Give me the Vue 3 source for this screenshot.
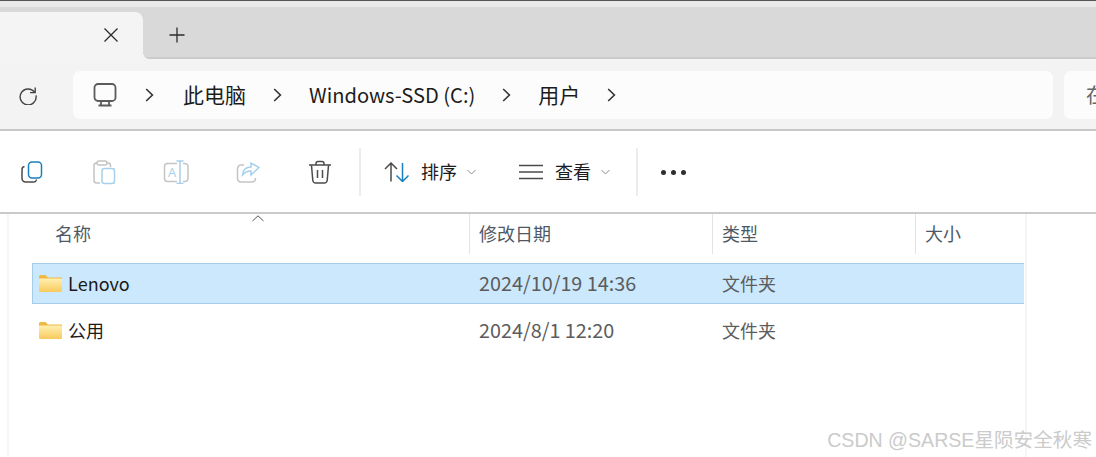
<template>
  <div class="explorer">
    <div class="top-edge"></div>
    <div class="tabbar">
      <div class="tab">
        <svg class="close" width="16" height="16" viewBox="0 0 16 16"><path d="M1.500 1.500l13 13M14.500 1.500l-13 13" /></svg>
      </div>
      <svg class="plus" width="16" height="16" viewBox="0 0 16 16"><path d="M8 .5v15M.5 8h15" /></svg>
    </div>

    <div class="navbar">
      <svg class="refresh" width="20" height="20" viewBox="0 0 20 20">
        <path d="M16.600 7.200A8 8 0 1 0 18 10.400" />
        <path d="M17.200 2.400v5.200h-5.200" />
      </svg>
      <div class="address">
        <svg class="pc" width="24" height="24" viewBox="0 0 24 24">
          <rect x="1.500" y="1" width="21" height="17" rx="3.500" />
          <path d="M8 18.500v3M16 18.500v3M5.500 22.500h13" />
        </svg>
        <template v-for="crumb in crumbs" :key="crumb.label">
          <svg class="chevron" width="9" height="14" viewBox="0 0 9 14"><path d="M1.200 1l6.200 6-6.200 6" /></svg>
          <span class="crumb" :class="{ latin: crumb.latin }">{{ crumb.label }}</span>
        </template>
        <svg class="chevron" width="9" height="14" viewBox="0 0 9 14"><path d="M1.200 1l6.200 6-6.200 6" /></svg>
      </div>
      <div class="search">在</div>
    </div>

    <div class="toolbar">
      <button class="tool">
        <svg width="24" height="24" viewBox="0 0 24 24">
          <path class="dark" d="M4.500 6.500A3 3 0 0 0 2 9.500v9a3.500 3.500 0 0 0 3.500 3.500h8a3 3 0 0 0 3-2.500" />
          <rect class="blue" x="8.500" y="2" width="13" height="16" rx="3.500" />
        </svg>
      </button>
      <button class="tool">
        <svg width="24" height="26" viewBox="0 0 24 26">
          <path class="dim" d="M5 4H4.500A2.500 2.500 0 0 0 2 6.500v15A2.500 2.500 0 0 0 4.500 24H8M15 4h1A2.500 2.500 0 0 1 18.500 6.500V8" />
          <rect class="dim" x="5" y="2" width="10" height="4" rx="2" />
          <rect class="pale" x="10" y="9.500" width="12.500" height="15" rx="2.500" />
        </svg>
      </button>
      <button class="tool">
        <svg width="26" height="24" viewBox="0 0 26 24">
          <path class="dim" d="M14 3.500H4.500a3 3 0 0 0-3 3v12a3 3 0 0 0 3 3H14M20 3.500h2a3 3 0 0 1 3 3v12a3 3 0 0 1-3 3h-2" />
          <path class="pale" d="M13.500 1h7M13.500 23.500h7M17 1v22.500" />
          <text class="icon-letter" x="5" y="17">A</text>
        </svg>
      </button>
      <button class="tool">
        <svg width="24" height="24" viewBox="0 0 24 24">
          <path class="dim" d="M8 5H5a3.500 3.500 0 0 0-3.500 3.500v10A3.500 3.500 0 0 0 5 22h11a3.500 3.500 0 0 0 3.500-3.500V18" />
          <path class="pale" d="M15 3v4c-5 0-8 3-8.500 8 2.500-3 5-4 8.500-4v4l8-7.500z" />
        </svg>
      </button>
      <button class="tool">
        <svg width="24" height="24" viewBox="0 0 24 24">
          <path class="dark" d="M1 5h22M8 5V3.500a2 2 0 0 1 2-2h4a2 2 0 0 1 2 2V5M3.500 5.500l1.300 15a3 3 0 0 0 3 2.500h8.400a3 3 0 0 0 3-2.500l1.300-15" />
          <path class="dark" d="M9.500 10v8M14.500 10v8" />
        </svg>
      </button>
      <div class="sep first"></div>
      <button class="menu sort">
        <svg width="26" height="20" viewBox="0 0 26 20">
          <path class="dark" d="M7 19.500V1M1 7l6-6 6 6" />
          <path class="blue" d="M18.500 1v18.500M12.500 13.500l6 6 6-6" />
        </svg>
        <span>排序</span>
        <svg class="caret" width="9" height="6" viewBox="0 0 9 6"><path d="M.5 1l4 4 4-4" /></svg>
      </button>
      <button class="menu view">
        <svg width="24" height="16" viewBox="0 0 24 16">
          <path class="dark" d="M0 1.500h24M0 8h24M0 14.500h24" />
        </svg>
        <span>查看</span>
        <svg class="caret" width="9" height="6" viewBox="0 0 9 6"><path d="M.5 1l4 4 4-4" /></svg>
      </button>
      <div class="sep second"></div>
      <div class="more"><i></i><i></i><i></i></div>
    </div>

    <div class="content">
      <div class="list">
        <div class="thead">
          <span class="col name-col">名称</span>
          <span class="col">修改日期</span>
          <span class="col">类型</span>
          <span class="col">大小</span>
        </div>
        <div
          v-for="row in rows"
          :key="row.name"
          class="row"
          :class="{ selected: row.selected }"
        >
          <div class="name">
            <svg width="23" height="17" viewBox="0 0 23 17">
              <defs>
                <linearGradient :id="'fold-' + row.id" x1="0" y1="0" x2="0" y2="1">
                  <stop offset="0" stop-color="#fff0b0" />
                  <stop offset="1" stop-color="#f8c95c" />
                </linearGradient>
              </defs>
              <path d="M0 1.500A1.500 1.500 0 0 1 1.500 0h5l2.500 2.500h14V5H0z" fill="#f0b93f" />
              <rect x="0" y="3.500" width="23" height="13.500" rx="1" :fill="'url(#fold-' + row.id + ')'" />
            </svg>
            <span class="cell-text">{{ row.name }}</span>
          </div>
          <span class="date cell-text">{{ row.date }}</span>
          <span class="type cell-text">{{ row.type }}</span>
          <span></span>
        </div>
      </div>
      <svg class="sort-arrow" width="12" height="7" viewBox="0 0 12 7"><path d="M.5 6L6 .8 11.500 6" /></svg>
      <div class="watermark">CSDN @SARSE星陨安全秋寒</div>
    </div>
  </div>
</template>

<script setup>
const crumbs = [
  { label: '此电脑', latin: false },
  { label: 'Windows-SSD (C:)', latin: true },
  { label: '用户', latin: false }
]

const rows = [
  { id: 1, name: 'Lenovo', date: '2024/10/19 14:36', type: '文件夹', selected: true },
  { id: 2, name: '公用', date: '2024/8/1 12:20', type: '文件夹', selected: false }
]
</script>

<style>
html, body {
  margin: 0;
  background: #fff;
  overflow: hidden;
}
</style>

<style scoped>
.explorer {
  width: 1096px;
  height: 457px;
  overflow: hidden;
  background: #fff;
  font-family: "Noto Sans CJK SC", "Open Sans", sans-serif;
  color: #1c1c1c;
}

.top-edge {
  height: 7px;
  background: #e9e9e9;
  border-top: 1px solid #555;
  box-sizing: border-box;
}

.tabbar {
  height: 52px;
  background: #d9d9d9;
  border-bottom: 2px solid #cbcbcb;
  box-sizing: border-box;
  display: flex;
  align-items: flex-start;
}

.tab {
  width: 143px;
  height: 51px;
  margin-top: 5px;
  background: #f4f4f4;
  border-radius: 0 8px 0 0;
  position: relative;
  flex: none;
}

.tab::after {
  content: "";
  position: absolute;
  right: -6px;
  bottom: 4px;
  width: 6px;
  height: 6px;
  background: radial-gradient(circle at 100% 0, transparent 5.500px, #f4f4f4 6px);
}

.close {
  position: absolute;
  left: 103px;
  top: 15px;
}

.close path, .plus path {
  fill: none;
  stroke: #2b2b2b;
  stroke-width: 1.300;
}

.plus {
  margin: 20px 0 0 26px;
}

.navbar {
  height: 72px;
  background: #f3f3f3;
  border-bottom: 2px solid #c9c9c9;
  box-sizing: border-box;
  display: flex;
  align-items: flex-start;
  padding-top: 12px;
}

.refresh {
  margin: 14px 0 0 18px;
  flex: none;
}

.refresh path {
  fill: none;
  stroke: #444;
  stroke-width: 1.400;
}

.address {
  width: 980px;
  height: 48px;
  margin-left: 35px;
  background: #fcfcfc;
  border-radius: 7px;
  display: flex;
  align-items: center;
  flex: none;
  font-size: 21px;
}

.pc {
  margin: 0 1px 1px 20px;
  flex: none;
}

.pc rect, .pc path {
  fill: none;
  stroke: #5b5b5b;
  stroke-width: 1.800;
}

.chevron {
  flex: none;
  margin: 0 27px;
}

.chevron path {
  fill: none;
  stroke: #333;
  stroke-width: 1.600;
}

.crumb {
  flex: none;
  white-space: nowrap;
  padding-bottom: 2px;
}

.crumb:first-of-type {
  margin-left: 2px;
}

.crumb.latin {
  font-size: 20.100px;
}

.search {
  width: 60px;
  height: 48px;
  margin-left: 11px;
  background: #fcfcfc;
  border-radius: 7px 0 0 7px;
  font-size: 20px;
  line-height: 47px;
  padding-left: 22px;
  color: #666;
  flex: none;
}

.toolbar {
  height: 83px;
  background: #fff;
  border-bottom: 2px solid #cacaca;
  box-sizing: border-box;
  display: flex;
  align-items: center;
  position: relative;
}

.toolbar svg path, .toolbar svg rect {
  fill: none;
  stroke-width: 1.500;
}

.dark { stroke: #4b4b4b; }
.blue { stroke: #1b7fbd; }
.dim { stroke: #c4c4c4; }
.pale { stroke: #a6d0ec; }

.icon-letter {
  font-family: "Open Sans", sans-serif;
  font-size: 13px;
  fill: #a6d0ec;
}

.tool {
  width: 72px;
  height: 48px;
  padding: 0;
  border: 0;
  background: none;
  display: flex;
  align-items: center;
  justify-content: center;
  flex: none;
}

.tool:first-child {
  margin-left: -4px;
}

.sep {
  width: 2px;
  height: 48px;
  background: #ececec;
  flex: none;
}

.sep.first {
  margin-left: 3px;
}

.menu {
  border: 0;
  padding: 0;
  background: none;
  display: flex;
  align-items: center;
  font-family: inherit;
  font-size: 18px;
  color: #1c1c1c;
  flex: none;
}

.menu span {
  margin: 0 10px 2px 11px;
}

.sort {
  margin-left: 23px;
}

.view {
  margin-left: 43px;
}

.view span {
  margin-left: 12px;
}

.caret path {
  fill: none;
  stroke: #8c8c8c !important;
  stroke-width: 1 !important;
}

.sep.second {
  margin-left: 26px;
}

.more {
  display: flex;
  gap: 5px;
  margin: 2px 0 0 23px;
}

.more i {
  width: 5px;
  height: 5px;
  border-radius: 50%;
  background: #2e2e2e;
}

.content {
  position: relative;
  height: 243px;
  padding-left: 7px;
  box-sizing: border-box;
}

.list {
  width: 1020px;
  height: 100%;
  border-left: 2px solid #f5f5f5;
  border-right: 2px solid #f5f5f5;
  box-sizing: border-box;
}

.thead {
  display: grid;
  grid-template-columns: 460px 243px 203px 1fr;
  height: 40px;
  font-size: 18px;
  line-height: 38px;
  color: #4d5a66;
  margin-bottom: 9px;
}

.col {
  padding-left: 9px;
  border-left: 1px solid #e3e3e3;
}

.col.name-col {
  padding-left: 46px;
  border-left: 0;
}

.row {
  display: grid;
  width: 992px;
  height: 41px;
  margin: 0 0 6px 23px;
  grid-template-columns: 437px 243px 203px 1fr;
  align-items: center;
  box-sizing: border-box;
  font-size: 18px;
  border: 1px solid transparent;
}

.row.selected {
  background: #cce8fd;
  border-color: #a3cdea;
  border-right: 0;
}

.cell-text {
  padding-bottom: 2px;
}

.name {
  display: flex;
  align-items: center;
  gap: 6px;
  padding-left: 6px;
  color: #1a1a1a;
}

.name svg {
  flex: none;
}

.date {
  padding-left: 9px;
  color: #5c5c5c;
  font-size: 19.800px;
}

.type {
  padding-left: 9px;
  color: #5c5c5c;
}

.sort-arrow {
  position: absolute;
  left: 252px;
  top: 1px;
}

.sort-arrow path {
  fill: none;
  stroke: #555;
}

.watermark {
  position: absolute;
  right: 4px;
  top: 212px;
  font-family: "Liberation Sans", "Noto Sans CJK SC", sans-serif;
  font-size: 19.600px;
  line-height: 28px;
  color: #cbcbcb;
  white-space: nowrap;
}
</style>
